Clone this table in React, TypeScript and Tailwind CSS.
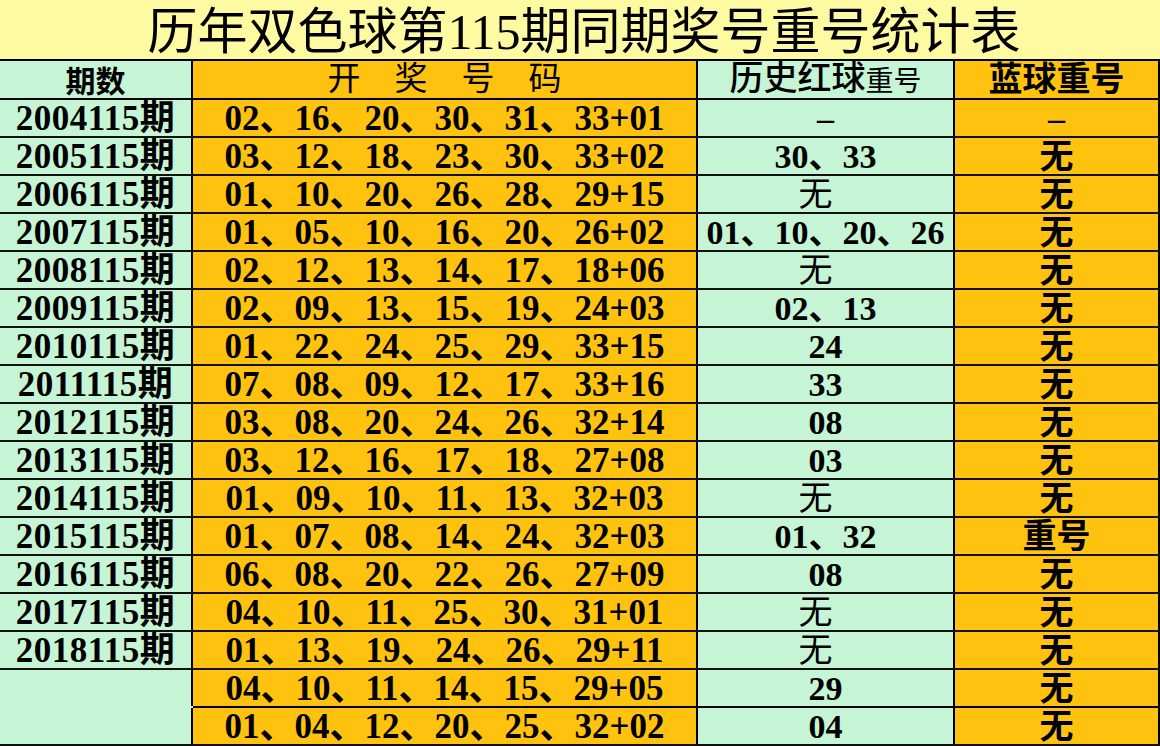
const rows: [string, string, string, string][] = [
  ['2004115期', '02、16、20、30、31、33+01', '–', '–'],
  ['2005115期', '03、12、18、23、30、33+02', '30、33', '无'],
  ['2006115期', '01、10、20、26、28、29+15', '无', '无'],
  ['2007115期', '01、05、10、16、20、26+02', '01、10、20、26', '无'],
  ['2008115期', '02、12、13、14、17、18+06', '无', '无'],
  ['2009115期', '02、09、13、15、19、24+03', '02、13', '无'],
  ['2010115期', '01、22、24、25、29、33+15', '24', '无'],
  ['2011115期', '07、08、09、12、17、33+16', '33', '无'],
  ['2012115期', '03、08、20、24、26、32+14', '08', '无'],
  ['2013115期', '03、12、16、17、18、27+08', '03', '无'],
  ['2014115期', '01、09、10、11、13、32+03', '无', '无'],
  ['2015115期', '01、07、08、14、24、32+03', '01、32', '重号'],
  ['2016115期', '06、08、20、22、26、27+09', '08', '无'],
  ['2017115期', '04、10、11、25、30、31+01', '无', '无'],
  ['2018115期', '01、13、19、24、26、29+11', '无', '无'],
  ['', '04、10、11、14、15、29+05', '29', '无'],
  ['', '01、04、12、20、25、32+02', '04', '无'],
];

export default function App() {
  return (
    <div className="w-[1160px] h-[746px] overflow-hidden bg-[#c6f5d6] font-['Liberation_Serif','Noto_Sans_CJK_SC',serif] text-black">
      {/* Title */}
      <div className="h-[61px] bg-[#fefaa2] border-b-2 border-black flex items-center justify-center pt-[5px] pl-[8px]">
        <h1 className="text-[50px] leading-none">历年双色球第115期同期奖号重号统计表</h1>
      </div>

      {/* Header */}
      <div className="grid grid-cols-[193px_505px_257px_205px] h-[39px] border-b-2 border-black">
        <div className="bg-[#c6f5d6] border-r-2 border-black flex items-end justify-center pb-[1px]">
          <span className="text-[30px] leading-none font-bold">期数</span>
        </div>
        <div className="bg-[#ffc20e] border-r-2 border-black flex items-center justify-center">
          <span className="text-[33px] leading-none tracking-[34px] pl-[34px]">开奖号码</span>
        </div>
        <div className="bg-[#c6f5d6] border-r-2 border-black flex items-end justify-center pb-[2px]">
          <span className="text-[34px] leading-none font-medium">历史红球</span>
          <span className="text-[28px] leading-none">重号</span>
        </div>
        <div className="bg-[#ffc20e] border-r-2 border-black flex items-center justify-center">
          <span className="text-[34px] leading-none font-bold">蓝球重号</span>
        </div>
      </div>

      {/* Rows */}
      {rows.map((r, i) => (
        <div key={i} className="flex flex-col h-[38px]">
          <div className="grid grid-cols-[193px_505px_257px_205px] h-[36px]">
            <div className="bg-[#c6f5d6] border-r-2 border-black flex items-center justify-center pt-[1px]">
              <span className="text-[35px] leading-[32px] font-bold tracking-[0.5px]">{r[0]}</span>
            </div>
            <div className="bg-[#ffc20e] border-r-2 border-black flex items-center justify-center pt-[1px]">
              <span className="text-[35px] leading-[32px] font-bold">{r[1]}</span>
            </div>
            <div className="bg-[#c6f5d6] border-r-2 border-black flex items-center justify-center pt-[1px]">
              <span className={r[2] === '无' ? 'text-[34px] leading-[32px] font-normal pr-[20px]' : 'text-[34px] leading-[32px] font-bold'}>
                {r[2]}
              </span>
            </div>
            <div className="bg-[#ffc20e] border-r-2 border-black flex items-center justify-center pt-[1px]">
              <span className="text-[34px] leading-[32px] font-bold">{r[3]}</span>
            </div>
          </div>
          <div className={i === 15 ? 'h-[2px] ml-[193px] bg-black' : 'h-[2px] bg-[#111111]'} />
        </div>
      ))}
    </div>
  );
}
